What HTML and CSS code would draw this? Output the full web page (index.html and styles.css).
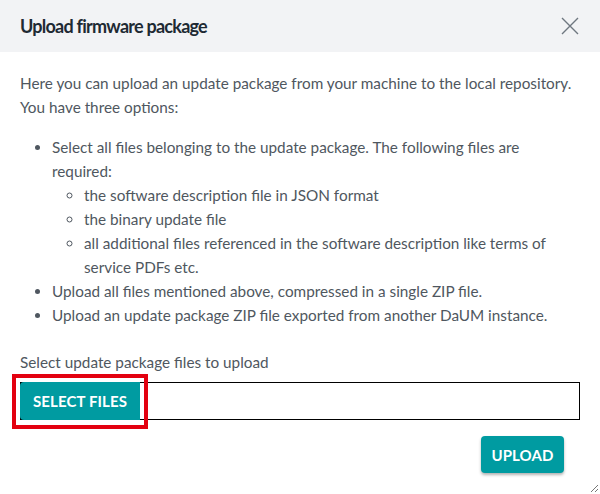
FILE: index.html
```html
<!DOCTYPE html>
<html>
<head>
<meta charset="utf-8">
<link rel="stylesheet" href="styles.css">
</head>
<body>
<div class="dialog">
  <div class="header">
    <h1 class="title">Upload firmware package</h1>
    <button class="close" aria-label="Close">
      <svg width="18" height="18" viewBox="0 0 18 18"><path d="M1 1L17 17M17 1L1 17" stroke="#6f7780" stroke-width="1.4" fill="none"/></svg>
    </button>
  </div>
  <div class="content">
    <p class="intro">Here you can upload an update package from your machine to the local repository.<br>You have three options:</p>
    <ul class="options">
      <li>Select all files belonging to the update package. The following files are<br>required:
        <ul class="sub">
          <li>the software description file in JSON format</li>
          <li>the binary update file</li>
          <li>all additional files referenced in the software description like terms of<br>service PDFs etc.</li>
        </ul>
      </li>
      <li>Upload all files mentioned above, compressed in a single ZIP file.</li>
      <li>Upload an update package ZIP file exported from another DaUM instance.</li>
    </ul>
    <div class="label">Select update package files to upload</div>
    <div class="filebox">
      <span class="highlight"></span>
      <button class="btn select">SELECT FILES</button>
    </div>
    <div class="footer">
      <button class="btn upload">UPLOAD</button>
    </div>
  </div>
  <svg class="grip" width="10" height="10" viewBox="0 0 10 10"><path d="M9 2L2 9M9 6L6 9" stroke="#777" stroke-width="1" fill="none"/></svg>
</div>
</body>
</html>
```
FILE: styles.css
```css
html, body {
  margin: 0;
  padding: 0;
  background: #ffffff;
}
body {
  font-family: Lato, "Open Sans", sans-serif;
  color: #4f5760;
}
.dialog {
  position: relative;
  width: 600px;
  height: 494px;
  overflow: hidden;
}
.header {
  height: 52px;
  background: #f2f3f5;
  display: flex;
  align-items: center;
  justify-content: space-between;
  padding: 0 21px 0 20px;
  box-sizing: border-box;
}
.title {
  margin: 0;
  font-size: 18px;
  font-weight: 700;
  color: #1e2a33;
  letter-spacing: -0.75px;
}
.close {
  border: 0;
  background: transparent;
  padding: 0;
  width: 18px;
  height: 18px;
  display: flex;
}
.content {
  padding: 19px 20px 0 20px;
  font-size: 15.3px;
  line-height: 24px;
}
.intro {
  margin: 0 0 16px 0;
  white-space: nowrap;
}
.options {
  margin: 0;
  padding-left: 32px;
  white-space: nowrap;
}
.sub {
  margin: 0;
  padding-left: 32px;
  list-style-type: circle;
}
.label {
  margin-top: 23px;
  height: 24px;
}
.filebox {
  position: relative;
  margin-top: 8px;
  height: 38px;
  border: 1px solid #000;
  box-sizing: border-box;
  display: flex;
}
.btn {
  border: 0;
  background: #009ba1;
  color: #fff;
  font-family: Lato, sans-serif;
  font-weight: 700;
  font-size: 15px;
  letter-spacing: 0.1px;
  border-radius: 4px;
  padding: 0;
}
.select {
  margin: -1px 0 0 -1px;
  width: 120px;
  height: 38px;
  border-radius: 4px 0 0 4px;
}
.highlight {
  position: absolute;
  left: -9px;
  top: -9px;
  width: 128px;
  height: 47px;
  border: 4px solid #e3000f;
  pointer-events: none;
}
.footer {
  display: flex;
  justify-content: flex-end;
  padding-right: 16px;
  margin-top: 16px;
}
.upload {
  width: 83px;
  height: 37px;
  box-shadow: 0 2px 3px rgba(0,0,0,0.3);
}
.grip {
  position: absolute;
  right: 1px;
  bottom: 1px;
}
```
